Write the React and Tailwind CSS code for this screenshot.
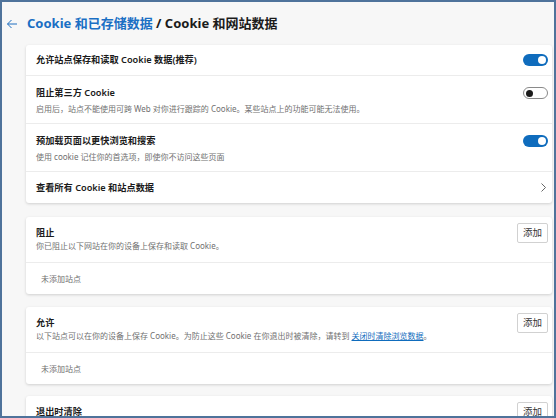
import React from 'react';

const font = { fontFamily: '"Noto Sans", "Noto Sans CJK SC", sans-serif' };

const Toggle = ({ on }) =>
  on ? (
    <div className="w-[25px] h-[12px] rounded-full bg-[#0f6cbd] flex items-center justify-end pr-[2px] shrink-0">
      <div className="w-[8px] h-[8px] rounded-full bg-white" />
    </div>
  ) : (
    <div className="w-[25px] h-[12px] rounded-full border border-[#8a8a8a] bg-white flex items-center pl-[2px] shrink-0">
      <div className="w-[7px] h-[7px] rounded-full bg-[#1b1b1b]" />
    </div>
  );

const SettingRow = ({ title, desc, on, last }) => (
  <div className={`flex justify-between pl-[10px] pr-[4px] ${desc ? 'h-[48px] pt-[11px]' : 'h-[31px] items-center'} ${last ? '' : 'border-b border-[#ececec]'}`}>
    <div>
      <div className="text-[9.2px] leading-[12px] font-semibold text-[#1b1b1b]">{title}</div>
      {desc && <div className="mt-[4px] text-[8px] leading-[12px] text-[#707070]">{desc}</div>}
    </div>
    <Toggle on={on} />
  </div>
);

const AddButton = () => (
  <button className="w-[31px] h-[20px] border border-[#d1d1d1] rounded-[2px] bg-white text-[9.5px] text-[#333] leading-none shrink-0">
    添加
  </button>
);

const SiteCard = ({ title, children, className }) => (
  <div className={`bg-white rounded-[3px] shadow-[0_1px_3px_rgba(0,0,0,0.16)] ${className}`}>
    <div className="flex justify-between pl-[10px] pr-[4px] pt-[6px] pb-[10px] border-b border-[#ececec]">
      <div className="pt-[4px]">
        <div className="text-[9.2px] leading-[12px] font-semibold text-[#1b1b1b]">{title}</div>
        {children && <div className="mt-[1px] text-[8px] leading-[12px] text-[#707070]">{children}</div>}
      </div>
      <AddButton />
    </div>
    <div className="h-[31px] flex items-center pl-[15px] text-[8px] text-[#707070]">未添加站点</div>
  </div>
);

export default function App() {
  return (
    <div style={font} className="w-[556px] h-[418px] overflow-hidden border-2 border-[#4f739b] bg-[#f7f7f7]">
      <div className="h-[43px] flex items-center pl-[4px]">
        <svg width="12" height="10" viewBox="0 0 12 10" className="mr-[9px]">
          <path d="M11 5H1.5M5.5 1L1.5 5l4 4" fill="none" stroke="#1f6fc0" strokeWidth="1" />
        </svg>
        <h1 className="text-[13px] font-bold leading-none text-[#1b1b1b]">
          <span className="text-[#1a6fc4]">Cookie 和已存储数据</span> / Cookie 和网站数据
        </h1>
      </div>

      <div className="pl-[24px] pr-[2px]">
        <div className="bg-white rounded-[3px] shadow-[0_1px_3px_rgba(0,0,0,0.16)]">
          <SettingRow title="允许站点保存和读取 Cookie 数据(推荐)" on />
          <SettingRow
            title="阻止第三方 Cookie"
            desc="启用后，站点不能使用可跨 Web 对你进行跟踪的 Cookie。某些站点上的功能可能无法使用。"
            on={false}
          />
          <SettingRow title="预加载页面以更快浏览和搜索" desc="使用 cookie 记住你的首选项，即使你不访问这些页面" on />
          <div className="h-[31px] flex items-center justify-between pl-[10px] pr-[6px]">
            <div className="text-[9.2px] leading-[12px] font-semibold text-[#1b1b1b]">查看所有 Cookie 和站点数据</div>
            <svg width="5" height="9" viewBox="0 0 5 9">
              <path d="M0.5 0.5L4.5 4.5L0.5 8.5" fill="none" stroke="#555" strokeWidth="0.9" />
            </svg>
          </div>
        </div>

        <SiteCard title="阻止" className="mt-[14px]">
          你已阻止以下网站在你的设备上保存和读取 Cookie。
        </SiteCard>

        <SiteCard title="允许" className="mt-[13px]">
          以下站点可以在你的设备上保存 Cookie。为防止这些 Cookie 在你退出时被清除，请转到{' '}
          <a className="text-[#0f6cbd] underline">关闭时清除浏览数据</a>。
        </SiteCard>

        <SiteCard title="退出时清除" className="mt-[12px]" />
      </div>
    </div>
  );
}
